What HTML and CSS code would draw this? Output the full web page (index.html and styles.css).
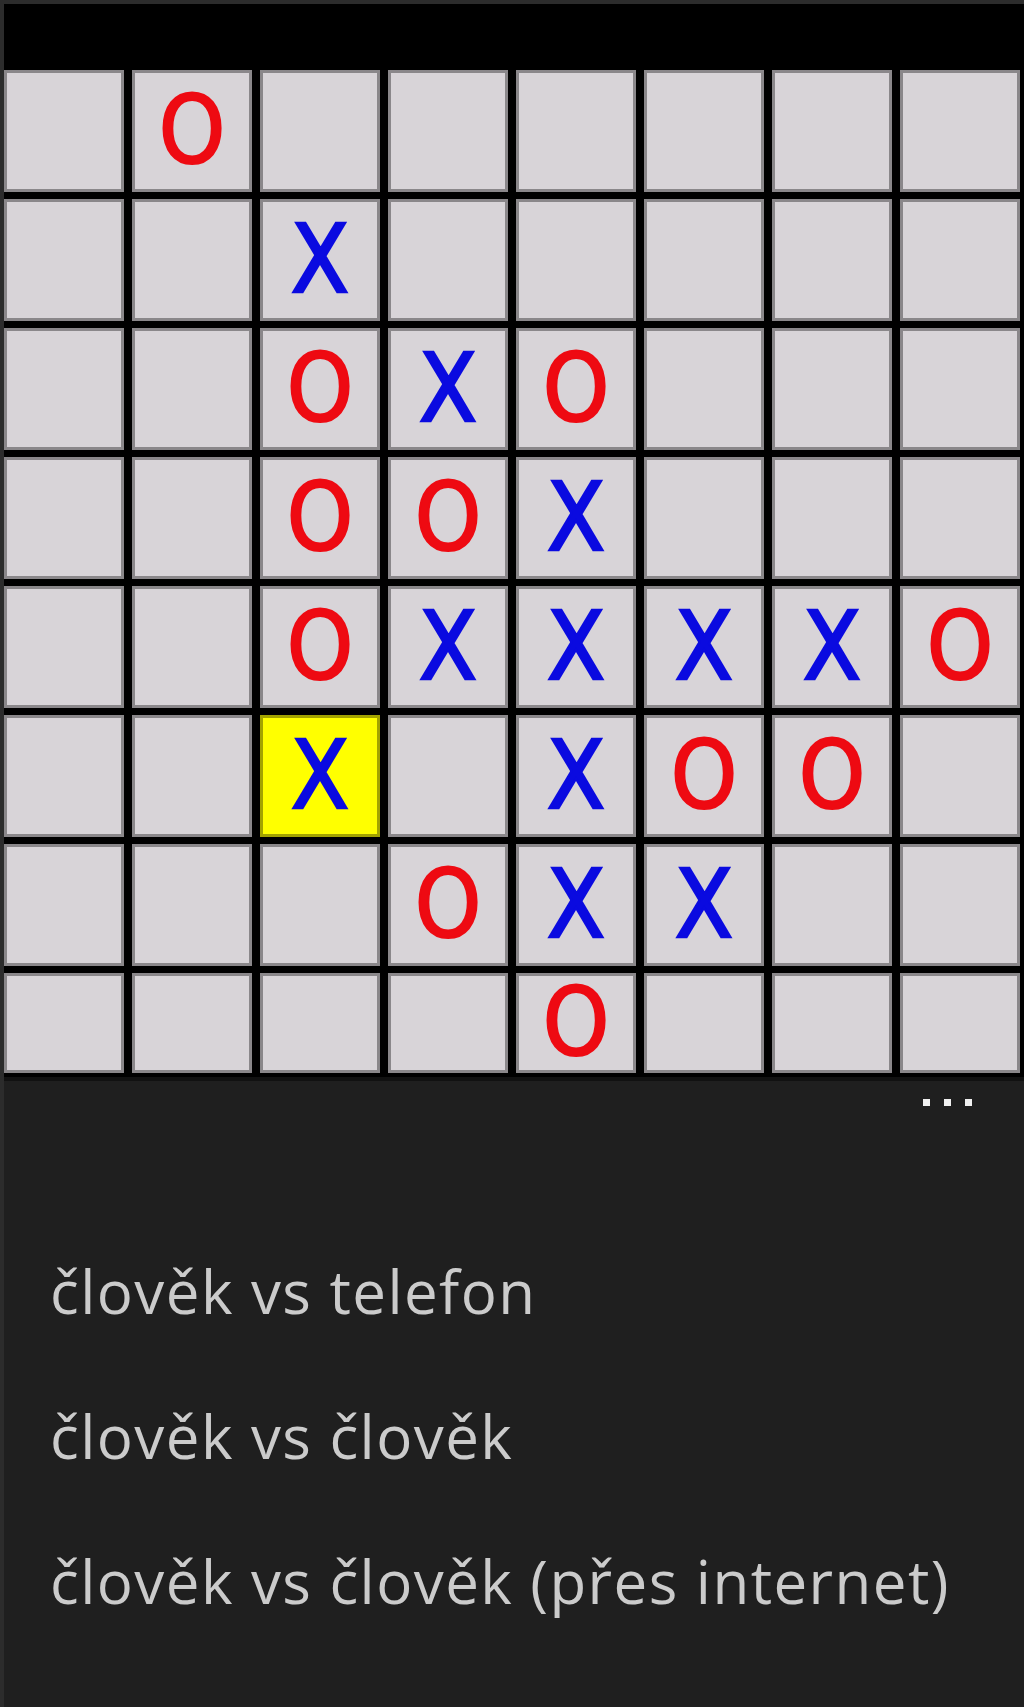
FILE: index.html
```html
<!DOCTYPE html>
<html lang="cs">
<head>
<meta charset="utf-8">
<title>Piškvorky</title>
<link rel="stylesheet" href="styles.css">
</head>
<body>
<div class="screen">
  <div class="game">
    <div class="header"></div>
    <div class="board">
      <div class="cell"></div><div class="cell"><span class="o">O</span></div><div class="cell"></div><div class="cell"></div><div class="cell"></div><div class="cell"></div><div class="cell"></div><div class="cell"></div>
      <div class="cell"></div><div class="cell"></div><div class="cell"><span class="x">X</span></div><div class="cell"></div><div class="cell"></div><div class="cell"></div><div class="cell"></div><div class="cell"></div>
      <div class="cell"></div><div class="cell"></div><div class="cell"><span class="o">O</span></div><div class="cell"><span class="x">X</span></div><div class="cell"><span class="o">O</span></div><div class="cell"></div><div class="cell"></div><div class="cell"></div>
      <div class="cell"></div><div class="cell"></div><div class="cell"><span class="o">O</span></div><div class="cell"><span class="o">O</span></div><div class="cell"><span class="x">X</span></div><div class="cell"></div><div class="cell"></div><div class="cell"></div>
      <div class="cell"></div><div class="cell"></div><div class="cell"><span class="o">O</span></div><div class="cell"><span class="x">X</span></div><div class="cell"><span class="x">X</span></div><div class="cell"><span class="x">X</span></div><div class="cell"><span class="x">X</span></div><div class="cell"><span class="o">O</span></div>
      <div class="cell"></div><div class="cell"></div><div class="cell last"><span class="x">X</span></div><div class="cell"></div><div class="cell"><span class="x">X</span></div><div class="cell"><span class="o">O</span></div><div class="cell"><span class="o">O</span></div><div class="cell"></div>
      <div class="cell"></div><div class="cell"></div><div class="cell"></div><div class="cell"><span class="o">O</span></div><div class="cell"><span class="x">X</span></div><div class="cell"><span class="x">X</span></div><div class="cell"></div><div class="cell"></div>
      <div class="cell"></div><div class="cell"></div><div class="cell"></div><div class="cell"></div><div class="cell"><span class="o">O</span></div><div class="cell"></div><div class="cell"></div><div class="cell"></div>
    </div>
  </div>
  <div class="appbar">
    <div class="dots"><span class="dot"></span><span class="dot"></span><span class="dot"></span></div>
    <ul class="menu">
      <li>člověk vs telefon</li>
      <li>člověk vs člověk</li>
      <li>člověk vs člověk (přes internet)</li>
    </ul>
  </div>
</div>
</body>
</html>
```

FILE: styles.css
```css
html, body {
  margin: 0;
  padding: 0;
}
body {
  width: 1024px;
  height: 1707px;
  overflow: hidden;
  background: #2c2c2c;
}
.screen {
  padding: 4px 0 0 4px;
  height: 1703px;
  display: flex;
  flex-direction: column;
}
.game {
  background: #000;
  height: 1073px;
  display: flex;
  flex-direction: column;
}
.header {
  height: 66px;
  flex: none;
}
.board {
  display: grid;
  grid-template-columns: repeat(8, 120px);
  grid-template-rows: repeat(7, 122px) 100px;
  column-gap: 8px;
  row-gap: 7px;
}
.cell {
  background: #d8d4d8;
  box-shadow: inset 0 0 0 3px rgba(0, 0, 0, 0.36);
  display: flex;
  align-items: center;
  justify-content: center;
  font-family: "DejaVu Sans Condensed", "DejaVu Sans", sans-serif;
  font-stretch: condensed;
  font-weight: normal;
  font-size: 94px;
  line-height: 1;
}
.cell.last {
  background: #ffff00;
}
.o {
  color: #ee0a12;
  -webkit-text-stroke: 2px #ee0a12;
}
.x {
  color: #0a0ae0;
  -webkit-text-stroke: 2.5px #0a0ae0;
}
.appbar {
  flex: 1;
  background: #1f1f1f;
  border-top: 4px solid #111;
}
.dots {
  display: flex;
  justify-content: flex-end;
  gap: 14px;
  padding: 18px 52px 0 0;
}
.dot {
  width: 7px;
  height: 7px;
  background: #f0f0f0;
}
.menu {
  list-style: none;
  margin: 113px 0 0 0;
  padding: 0 0 0 46px;
  font-family: "Open Sans", "Noto Sans", sans-serif;
  font-weight: 400;
  font-size: 60px;
  letter-spacing: 1.45px;
  line-height: 145px;
  color: #cbcbcb;
}
.menu li {
  margin: 0;
  white-space: nowrap;
}
```
